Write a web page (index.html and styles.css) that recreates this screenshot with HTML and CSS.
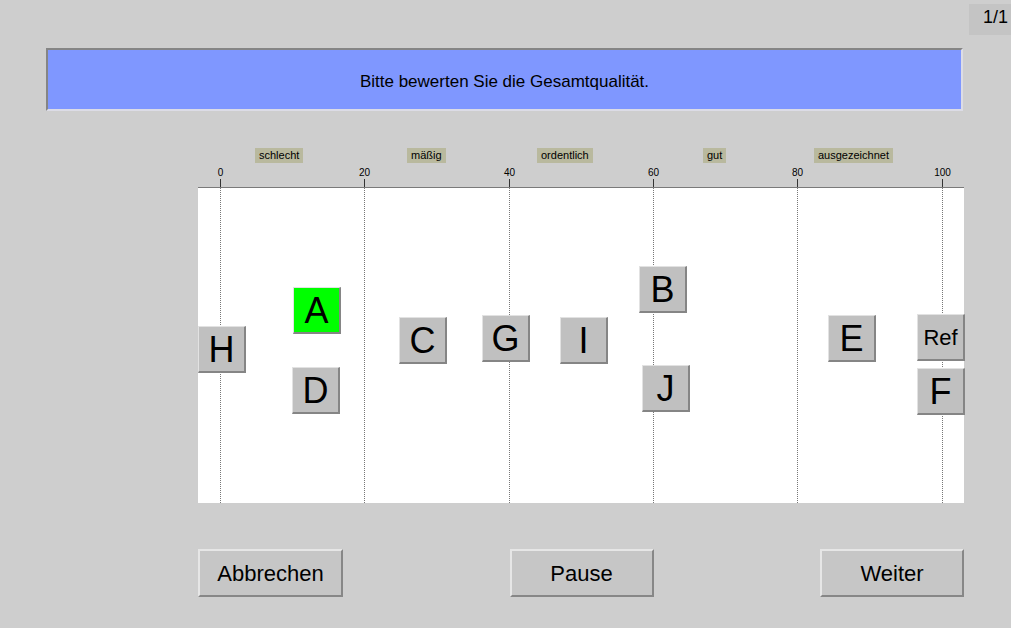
FILE: index.html
```html
<!DOCTYPE html>
<html lang="de">
<head>
<meta charset="utf-8">
<title>Bewertung</title>
<link rel="stylesheet" href="styles.css">
</head>
<body>
<div class="page-counter">1/1</div>
<main class="page">
  <header class="prompt">Bitte bewerten Sie die Gesamtqualität.</header>

  <section class="scale">
    <div class="scale-head">
      <span class="grade" style="left:57px">schlecht</span>
      <span class="grade" style="left:209px">mäßig</span>
      <span class="grade" style="left:339px">ordentlich</span>
      <span class="grade" style="left:505px">gut</span>
      <span class="grade" style="left:616px">ausgezeichnet</span>

      <span class="mark" style="left:22px"><span class="num">0</span><span class="tick"></span></span>
      <span class="mark" style="left:166px"><span class="num">20</span><span class="tick"></span></span>
      <span class="mark" style="left:311px"><span class="num">40</span><span class="tick"></span></span>
      <span class="mark" style="left:455px"><span class="num">60</span><span class="tick"></span></span>
      <span class="mark" style="left:599px"><span class="num">80</span><span class="tick"></span></span>
      <span class="mark" style="left:744px"><span class="num">100</span><span class="tick"></span></span>
    </div>

    <div class="plot">
      <span class="grid-line" style="left:22px"></span>
      <span class="grid-line" style="left:166px"></span>
      <span class="grid-line" style="left:311px"></span>
      <span class="grid-line" style="left:455px"></span>
      <span class="grid-line" style="left:599px"></span>
      <span class="grid-line" style="left:744px"></span>

      <div class="tile" style="left:0px;top:138px">H</div>
      <div class="tile tile-active" style="left:95px;top:99px">A</div>
      <div class="tile" style="left:94px;top:179px">D</div>
      <div class="tile" style="left:201px;top:129px">C</div>
      <div class="tile" style="left:284px;top:127px">G</div>
      <div class="tile" style="left:362px;top:129px">I</div>
      <div class="tile" style="left:441px;top:78px">B</div>
      <div class="tile" style="left:444px;top:177px">J</div>
      <div class="tile" style="left:630px;top:127px">E</div>
      <div class="tile tile-ref" style="left:719px;top:126px">Ref</div>
      <div class="tile" style="left:719px;top:180px">F</div>
    </div>
  </section>

  <footer class="actions">
    <button class="btn btn-wide">Abbrechen</button>
    <button class="btn">Pause</button>
    <button class="btn">Weiter</button>
  </footer>
</main>
</body>
</html>
```

FILE: styles.css
```css
* { box-sizing: border-box; }

html, body {
  margin: 0;
  padding: 0;
  background: #cecece;
  font-family: "Liberation Sans", Arial, sans-serif;
  color: #000;
}

body {
  width: 1011px;
  height: 628px;
  position: relative;
  overflow: hidden;
}

.page-counter {
  position: absolute;
  top: 4px;
  right: 0;
  width: 42px;
  height: 31px;
  background: #c4c4c4;
  font-size: 18px;
  line-height: 26px;
  text-align: right;
  padding-right: 3px;
}

.page {
  display: flex;
  flex-direction: column;
  padding-top: 48px;
}

.prompt {
  margin-left: 46px;
  width: 917px;
  height: 63px;
  background: #7f97ff;
  border-top: 2px solid #858585;
  border-left: 2px solid #858585;
  border-bottom: 2px solid #dcdce6;
  border-right: 2px solid #dcdce6;
  display: flex;
  align-items: center;
  justify-content: center;
  font-size: 17px;
  padding-top: 4px;
}

.scale {
  margin-top: 37px;
  margin-left: 198px;
  width: 766px;
}

.scale-head {
  position: relative;
  height: 39px;
}

.grade {
  position: absolute;
  top: 0;
  height: 15px;
  padding: 0 4px;
  background: #b9b99e;
  font-size: 11px;
  line-height: 15px;
  white-space: nowrap;
}

.mark {
  position: absolute;
  top: 19px;
  width: 0;
  height: 20px;
}

.num {
  position: absolute;
  left: -15px;
  width: 31px;
  top: 0;
  font-size: 10px;
  line-height: 12px;
  text-align: center;
}

.tick {
  position: absolute;
  left: 0;
  top: 12px;
  width: 1px;
  height: 8px;
  background: #333;
}

.plot {
  position: relative;
  height: 316px;
  background: #fff;
  border-top: 1px solid #7a7a7a;
}

.grid-line {
  position: absolute;
  top: 0;
  bottom: 0;
  width: 0;
  border-left: 1px dotted #777;
}

.tile {
  position: absolute;
  width: 48px;
  height: 47px;
  background: #c0c0c0;
  border-top: 1px solid #e2e2e2;
  border-left: 1px solid #e2e2e2;
  border-right: 2px solid #858585;
  border-bottom: 2px solid #858585;
  display: flex;
  align-items: center;
  justify-content: center;
  font-size: 36px;
  line-height: 1;
  padding-top: 1px;
}

.tile-active {
  background: #00ff00;
}

.tile-ref {
  font-size: 22px;
}

.actions {
  margin-top: 46px;
  margin-left: 198px;
  width: 766px;
  display: flex;
  justify-content: space-between;
}

.btn {
  width: 144px;
  height: 48px;
  background: #c6c6c6;
  border-top: 2px solid #e6e6e6;
  border-left: 2px solid #e6e6e6;
  border-right: 2px solid #878787;
  border-bottom: 2px solid #878787;
  font-family: "Liberation Sans", Arial, sans-serif;
  font-size: 22px;
  color: #000;
  padding: 2px 0 0;
}

.btn-wide {
  width: 145px;
}
```
